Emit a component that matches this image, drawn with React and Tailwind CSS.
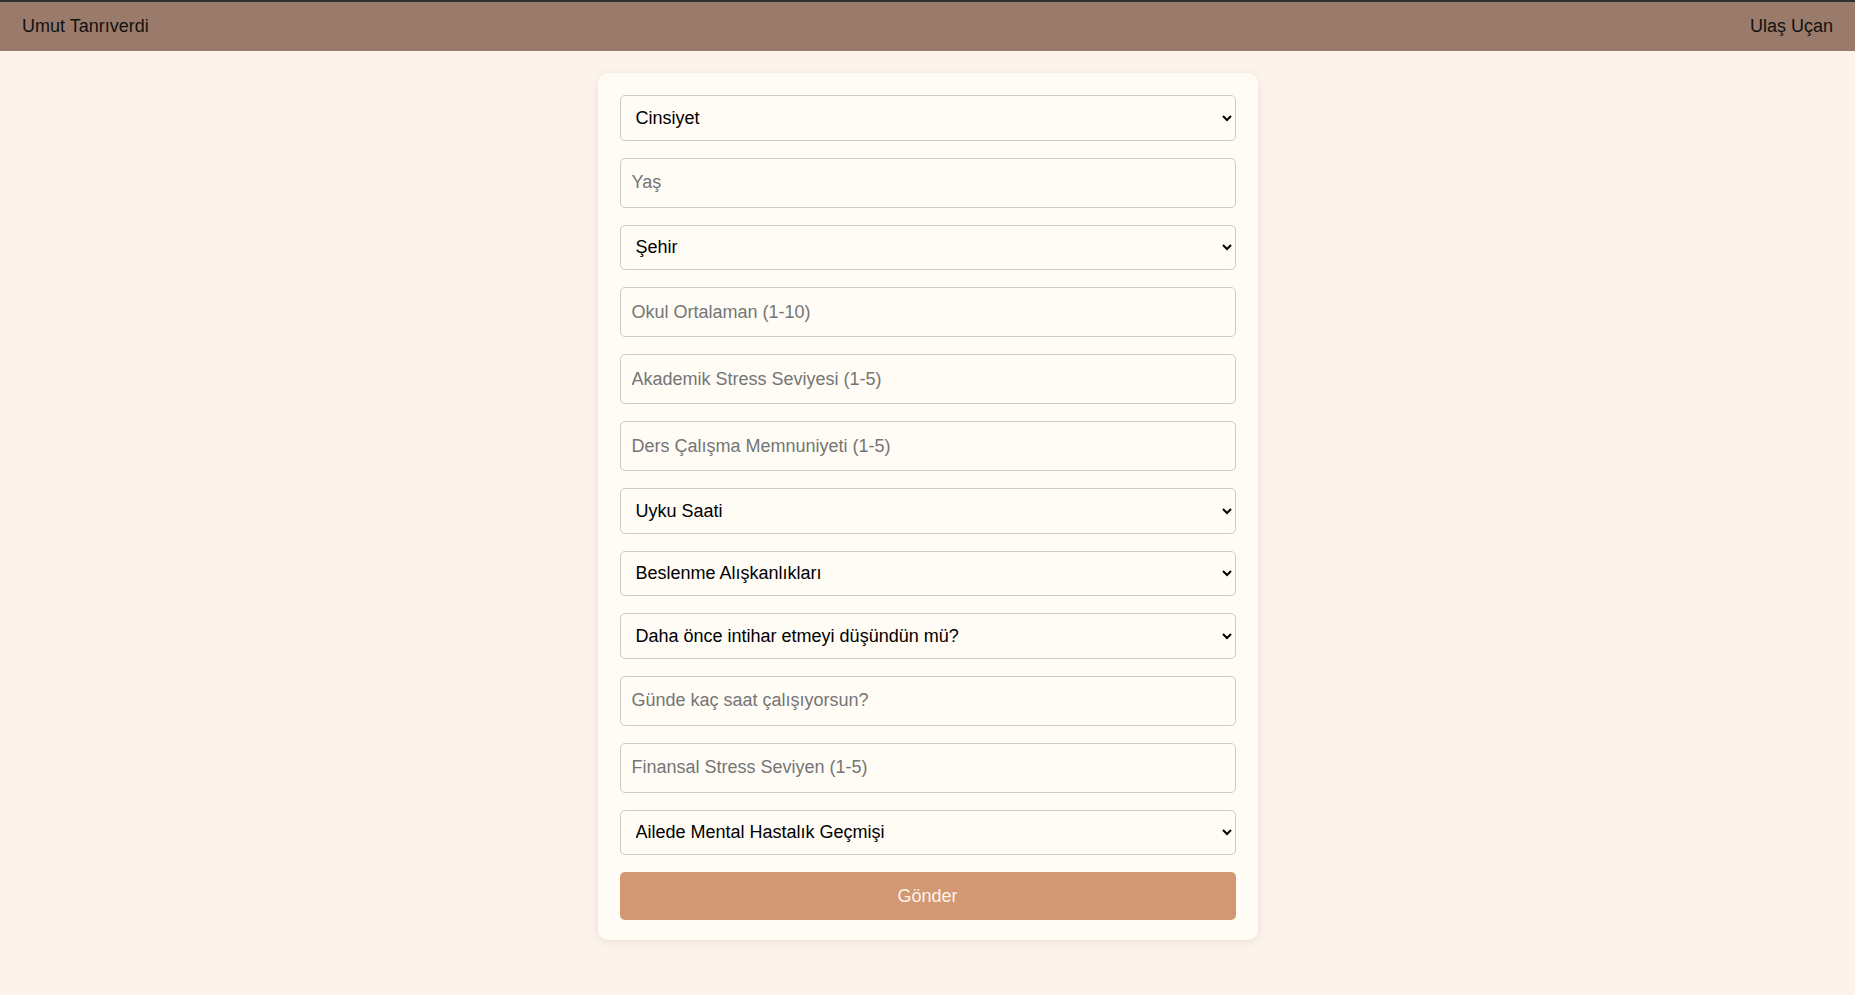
import React from "react";

const fields = [
  { type: "select", label: "Cinsiyet", options: ["Erkek", "Kadın"] },
  { type: "input", label: "Yaş" },
  { type: "select", label: "Şehir", options: ["İstanbul", "Ankara", "İzmir"] },
  { type: "input", label: "Okul Ortalaman (1-10)" },
  { type: "input", label: "Akademik Stress Seviyesi (1-5)" },
  { type: "input", label: "Ders Çalışma Memnuniyeti (1-5)" },
  { type: "select", label: "Uyku Saati", options: ["5 saatten az", "5-6 saat", "7-8 saat", "8 saatten fazla"] },
  { type: "select", label: "Beslenme Alışkanlıkları", options: ["Sağlıklı", "Orta", "Sağlıksız"] },
  { type: "select", label: "Daha önce intihar etmeyi düşündün mü?", options: ["Evet", "Hayır"] },
  { type: "input", label: "Günde kaç saat çalışıyorsun?" },
  { type: "input", label: "Finansal Stress Seviyen (1-5)" },
  { type: "select", label: "Ailede Mental Hastalık Geçmişi", options: ["Evet", "Hayır"] },
];

const App = () => {
  return (
    <div className="min-h-screen bg-[#fcf4ea] font-['Liberation_Sans',Arial,sans-serif]">
      <header className="h-[51px] bg-[#9a7b6b] border-t-2 border-[#2f2f33] flex items-center justify-between px-[22px] text-[18px] text-[#111]">
        <p>Umut Tanrıverdi</p>
        <p>Ulaş Uçan</p>
      </header>

      <div className="w-[660px] mx-auto mt-[22px] bg-[#fffcf5] rounded-[10px] shadow-[0_2px_10px_rgba(0,0,0,0.08)] pt-[22px] px-[22px] pb-[20px]">
        <form className="flex flex-col gap-[17px]" onSubmit={(e) => e.preventDefault()}>
          {fields.map((f, i) =>
            f.type === "select" ? (
              <select
                key={i}
                defaultValue=""
                className="h-[45.5px] w-full border border-[#cfcac4] rounded-[5px] bg-[#fffcf5] px-[11px] text-[18px] text-black outline-none"
              >
                <option value="" disabled>
                  {f.label}
                </option>
                {f.options.map((o) => (
                  <option key={o}>{o}</option>
                ))}
              </select>
            ) : (
              <input
                key={i}
                type="text"
                placeholder={f.label}
                className="h-[50px] w-full border border-[#cfcac4] rounded-[5px] bg-[#fffcf5] px-[11px] text-[18px] text-black placeholder:text-[#757575] outline-none"
              />
            )
          )}
          <button
            type="submit"
            className="h-[48px] w-full rounded-[5px] bg-[#d29873] text-[#fdf3ea] text-[18px]"
          >
            Gönder
          </button>
        </form>
      </div>
    </div>
  );
};

export default App;
